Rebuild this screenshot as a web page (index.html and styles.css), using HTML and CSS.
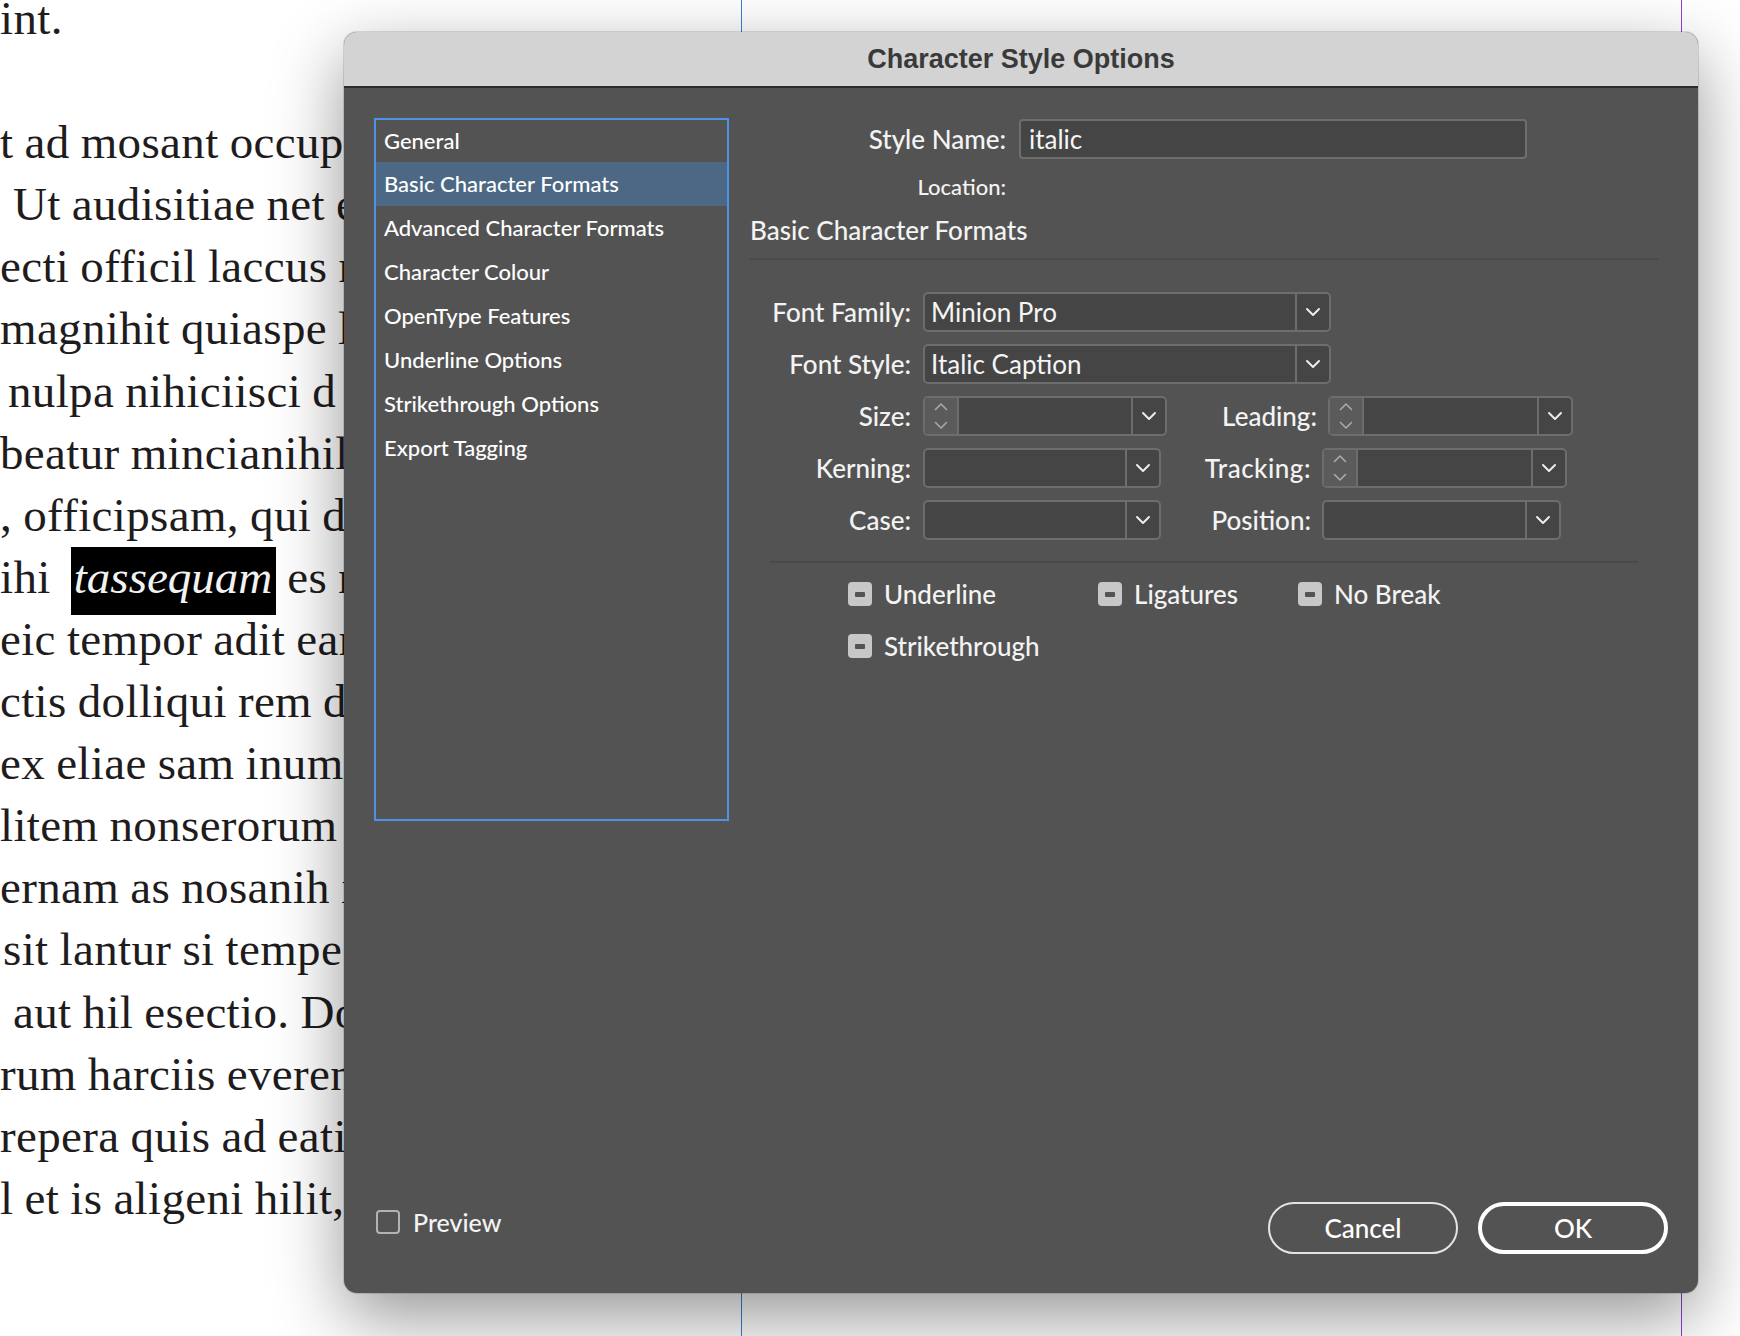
FILE: index.html
```html
<!DOCTYPE html>
<html lang="en">
<head>
<meta charset="utf-8">
<title>Character Style Options</title>
<link rel="stylesheet" href="styles.css">
</head>
<body>
<div class="page">
  <div class="page-text">
    <div class="ln">int.</div>
    <div class="ln"></div>
    <div class="ln">t ad mosant occup</div>
    <div class="ln ind-l">Ut audisitiae net e</div>
    <div class="ln">ecti officil laccus m</div>
    <div class="ln">magnihit quiaspe l</div>
    <div class="ln ind-m">nulpa nihiciisci d</div>
    <div class="ln">beatur mincianihil</div>
    <div class="ln">, officipsam, qui d</div>
    <div class="ln">ihi <span class="hl">tassequam</span> es r</div>
    <div class="ln">eic tempor adit ear</div>
    <div class="ln">ctis dolliqui rem d</div>
    <div class="ln">ex eliae sam inum q</div>
    <div class="ln">litem nonserorum</div>
    <div class="ln">ernam as nosanih i</div>
    <div class="ln ind-s">sit lantur si tempe</div>
    <div class="ln ind-l">aut hil esectio. Do</div>
    <div class="ln">rum harciis everen</div>
    <div class="ln">repera quis ad eati</div>
    <div class="ln">l et is aligeni hilit, s</div>
  </div>

  <div class="guide guide-blue"></div>
  <div class="guide guide-purple"></div>

  <div class="dialog">
    <div class="titlebar">Character Style Options</div>
    <div class="dbody">
      <div class="main">
        <ul class="nav">
          <li class="nav-item first">General</li>
          <li class="nav-item selected">Basic Character Formats</li>
          <li class="nav-item">Advanced Character Formats</li>
          <li class="nav-item">Character Colour</li>
          <li class="nav-item">OpenType Features</li>
          <li class="nav-item">Underline Options</li>
          <li class="nav-item">Strikethrough Options</li>
          <li class="nav-item">Export Tagging</li>
        </ul>

        <div class="panel">
          <div class="name-row">
            <span class="name-label">Style Name:</span>
            <div class="text-input">italic</div>
          </div>
          <div class="loc-row">
            <span class="loc-label">Location:</span>
          </div>
          <div class="section-title">Basic Character Formats</div>
          <div class="sep"></div>

          <div class="fields">
            <div class="frow">
              <span class="flabel">Font Family:</span>
              <div class="combo w-wide">
                <div class="val">Minion Pro</div>
                <div class="arrow"><svg width="16" height="10" viewBox="0 0 16 10"><path d="M2 2 L8 8 L14 2" fill="none" stroke="#ececec" stroke-width="2" stroke-linecap="round" stroke-linejoin="round"/></svg></div>
              </div>
            </div>
            <div class="frow">
              <span class="flabel">Font Style:</span>
              <div class="combo w-wide">
                <div class="val">Italic Caption</div>
                <div class="arrow"><svg width="16" height="10" viewBox="0 0 16 10"><path d="M2 2 L8 8 L14 2" fill="none" stroke="#ececec" stroke-width="2" stroke-linecap="round" stroke-linejoin="round"/></svg></div>
              </div>
            </div>
            <div class="frow">
              <span class="flabel">Size:</span>
              <div class="combo w-size">
                <div class="spin"><svg width="16" height="28" viewBox="0 0 16 28"><path d="M2.5 7.5 L8 2 L13.5 7.5 M2.5 20.5 L8 26 L13.5 20.5" fill="none" stroke="#a9a9a9" stroke-width="1.6" stroke-linecap="round" stroke-linejoin="round"/></svg></div>
                <div class="val"></div>
                <div class="arrow"><svg width="16" height="10" viewBox="0 0 16 10"><path d="M2 2 L8 8 L14 2" fill="none" stroke="#ececec" stroke-width="2" stroke-linecap="round" stroke-linejoin="round"/></svg></div>
              </div>
              <span class="flabel2">Leading:</span>
              <div class="combo w-lead">
                <div class="spin"><svg width="16" height="28" viewBox="0 0 16 28"><path d="M2.5 7.5 L8 2 L13.5 7.5 M2.5 20.5 L8 26 L13.5 20.5" fill="none" stroke="#a9a9a9" stroke-width="1.6" stroke-linecap="round" stroke-linejoin="round"/></svg></div>
                <div class="val"></div>
                <div class="arrow"><svg width="16" height="10" viewBox="0 0 16 10"><path d="M2 2 L8 8 L14 2" fill="none" stroke="#ececec" stroke-width="2" stroke-linecap="round" stroke-linejoin="round"/></svg></div>
              </div>
            </div>
            <div class="frow">
              <span class="flabel">Kerning:</span>
              <div class="combo w-kern">
                <div class="val"></div>
                <div class="arrow"><svg width="16" height="10" viewBox="0 0 16 10"><path d="M2 2 L8 8 L14 2" fill="none" stroke="#ececec" stroke-width="2" stroke-linecap="round" stroke-linejoin="round"/></svg></div>
              </div>
              <span class="flabel2 wide-label">Tracking:</span>
              <div class="combo w-track">
                <div class="spin"><svg width="16" height="28" viewBox="0 0 16 28"><path d="M2.5 7.5 L8 2 L13.5 7.5 M2.5 20.5 L8 26 L13.5 20.5" fill="none" stroke="#a9a9a9" stroke-width="1.6" stroke-linecap="round" stroke-linejoin="round"/></svg></div>
                <div class="val"></div>
                <div class="arrow"><svg width="16" height="10" viewBox="0 0 16 10"><path d="M2 2 L8 8 L14 2" fill="none" stroke="#ececec" stroke-width="2" stroke-linecap="round" stroke-linejoin="round"/></svg></div>
              </div>
            </div>
            <div class="frow">
              <span class="flabel">Case:</span>
              <div class="combo w-kern">
                <div class="val"></div>
                <div class="arrow"><svg width="16" height="10" viewBox="0 0 16 10"><path d="M2 2 L8 8 L14 2" fill="none" stroke="#ececec" stroke-width="2" stroke-linecap="round" stroke-linejoin="round"/></svg></div>
              </div>
              <span class="flabel2">Position:</span>
              <div class="combo w-pos">
                <div class="val"></div>
                <div class="arrow"><svg width="16" height="10" viewBox="0 0 16 10"><path d="M2 2 L8 8 L14 2" fill="none" stroke="#ececec" stroke-width="2" stroke-linecap="round" stroke-linejoin="round"/></svg></div>
              </div>
            </div>
          </div>

          <div class="sep sep-inner"></div>

          <div class="checks">
            <div class="chk"><span class="cbox ind"></span>Underline</div>
            <div class="chk"><span class="cbox ind"></span>Ligatures</div>
            <div class="chk"><span class="cbox ind"></span>No Break</div>
            <div class="chk"><span class="cbox ind"></span>Strikethrough</div>
          </div>
        </div>
      </div>

      <div class="footer">
        <div class="preview"><span class="cbox empty"></span>Preview</div>
        <div class="buttons">
          <button class="btn">Cancel</button>
          <button class="btn btn-ok">OK</button>
        </div>
      </div>
    </div>
  </div>
</div>
</body>
</html>
```

FILE: styles.css
```css
html, body {
  margin: 0;
  padding: 0;
  background: #ffffff;
}

.page {
  position: relative;
  width: 1740px;
  height: 1336px;
  overflow: hidden;
  background: #ffffff;
}

/* Document text behind the dialog (clipped at the dialog edge) */
.page-text {
  width: 344px;
  overflow: hidden;
  margin-top: -13px;
  font-family: "Liberation Serif", "DejaVu Serif", serif;
  font-size: 47px;
  letter-spacing: 0.35px;
  word-spacing: -1px;
  line-height: 62.1px;
  color: #1f1c1d;
  white-space: nowrap;
}

.ln {
  height: 62.1px;
}

.ind-s { padding-left: 3px; }
.ind-m { padding-left: 8px; }
.ind-l { padding-left: 13px; }

.hl {
  margin-left: 9px;
  background: #000000;
  color: #f2f2f2;
  font-style: italic;
  letter-spacing: 0;
  padding: 4px 4px 12px 3px;
}

/* page guides */
.guide {
  position: absolute;
  top: 0;
  bottom: 0;
  width: 1px;
}
.guide-blue { left: 741px; background: #3a7fd6; }
.guide-purple { left: 1681px; background: #8c3fd1; }

/* Dialog */
.dialog {
  position: absolute;
  left: 344px;
  top: 32px;
  width: 1354px;
  height: 1261px;
  display: flex;
  flex-direction: column;
  background: #535353;
  border-radius: 13px;
  overflow: hidden;
  box-shadow: 0 24px 70px rgba(0, 0, 0, 0.42), 0 0 0 1px rgba(0, 0, 0, 0.12);
}

.titlebar {
  height: 54px;
  flex: 0 0 auto;
  display: flex;
  align-items: center;
  justify-content: center;
  background: #d3d3d3;
  border-bottom: 2px solid #2c2c2c;
  font-family: "Liberation Sans", Arial, sans-serif;
  font-weight: 700;
  font-size: 27px;
  color: #3a3a3a;
}

.dbody {
  flex: 1 1 auto;
  display: flex;
  flex-direction: column;
  padding: 30px 30px 39px 30px;
  font-family: Lato, "Open Sans", sans-serif;
  color: #f3f3f3;
}

.main {
  display: flex;
  gap: 21px;
}

/* Left navigation list */
.nav {
  list-style: none;
  margin: 0;
  padding: 0;
  width: 355px;
  height: 703px;
  box-sizing: border-box;
  border: 2px solid #4a93e6;
  flex: 0 0 auto;
}

.nav-item {
  height: 44px;
  display: flex;
  align-items: center;
  padding-left: 8px;
  padding-bottom: 2px;
  box-sizing: border-box;
  font-size: 22px;
  font-weight: 500;
  color: #ffffff;
}
.nav-item.first { height: 42px; }
.nav-item.selected { background: #4c6884; }

/* Right panel */
.panel {
  flex: 1 1 auto;
  display: flex;
  flex-direction: column;
}

.name-row {
  display: flex;
  align-items: center;
  margin-top: 1px;
  height: 40px;
}

.name-label {
  width: 256px;
  text-align: right;
  margin-right: 13px;
  font-size: 26px;
  font-weight: 500;
}

.text-input {
  width: 508px;
  height: 40px;
  box-sizing: border-box;
  border: 2px solid #6e6e6e;
  border-radius: 4px;
  background: #454545;
  padding-left: 8px;
  display: flex;
  align-items: center;
  font-size: 26px;
  color: #f5f5f5;
}

.loc-row {
  margin-top: 12px;
  height: 30px;
  display: flex;
  align-items: center;
}

.loc-label {
  width: 256px;
  text-align: right;
  font-size: 22px;
  font-weight: 500;
}

.section-title {
  margin-top: 13px;
  height: 32px;
  line-height: 32px;
  font-size: 26px;
  font-weight: 500;
}

.sep {
  margin-top: 12px;
  height: 2px;
  width: 908px;
  background: #4a4a4a;
}

.sep-inner {
  margin-top: 21px;
  margin-left: 20px;
  width: 868px;
}

/* Field grid */
.fields {
  margin-top: 32px;
  display: flex;
  flex-direction: column;
  gap: 12px;
}

.frow {
  display: flex;
  align-items: center;
  height: 40px;
}

.flabel {
  width: 161px;
  margin-right: 12px;
  text-align: right;
  font-size: 26px;
  font-weight: 500;
}

.flabel2 {
  width: 150px;
  margin-right: 11px;
  text-align: right;
  font-size: 26px;
  font-weight: 500;
}

.wide-label {
  letter-spacing: 0.5px;
}

.combo {
  height: 40px;
  box-sizing: border-box;
  display: flex;
  border: 2px solid #6d6d6d;
  border-radius: 5px;
  background: #454545;
  overflow: hidden;
}

.w-wide { width: 408px; }
.w-size { width: 244px; }
.w-lead { width: 245px; }
.w-kern { width: 238px; }
.w-track { width: 245px; }
.w-pos { width: 239px; }

.combo .spin {
  width: 34px;
  box-sizing: border-box;
  background: #5b5b5b;
  border-right: 2px solid #6d6d6d;
  display: flex;
  align-items: center;
  justify-content: center;
}

.combo .val {
  flex: 1 1 auto;
  padding-left: 6px;
  display: flex;
  align-items: center;
  font-size: 26px;
  color: #f5f5f5;
  white-space: nowrap;
}

.combo .arrow {
  width: 34px;
  box-sizing: border-box;
  border-left: 2px solid #6d6d6d;
  display: flex;
  align-items: center;
  justify-content: center;
}

/* Checkboxes */
.checks {
  margin-top: 19px;
  padding-left: 98px;
  display: grid;
  grid-template-columns: 250px 200px auto;
  row-gap: 28px;
}

.chk {
  display: flex;
  align-items: center;
  gap: 12px;
  height: 24px;
  line-height: 24px;
  font-size: 26px;
  font-weight: 500;
  white-space: nowrap;
}

.cbox {
  width: 24px;
  height: 24px;
  box-sizing: border-box;
  border-radius: 4px;
  flex: 0 0 auto;
  display: flex;
  align-items: center;
  justify-content: center;
}

.cbox.ind {
  background: #c7c7c7;
}
.cbox.ind::after {
  content: "";
  width: 10px;
  height: 5px;
  border-radius: 1px;
  background: #535353;
}

.cbox.empty {
  border: 2px solid #b3b3b3;
}

/* Footer */
.footer {
  margin-top: auto;
  display: flex;
  align-items: center;
  justify-content: space-between;
  height: 52px;
}

.preview {
  display: flex;
  align-items: center;
  gap: 13px;
  margin-left: 2px;
  margin-bottom: 12px;
  font-size: 25px;
  font-weight: 500;
}

.buttons {
  display: flex;
  gap: 20px;
}

.btn {
  width: 190px;
  height: 52px;
  box-sizing: border-box;
  border: 2px solid #e4e4e4;
  border-radius: 26px;
  background: transparent;
  color: #ffffff;
  font-family: Lato, "Open Sans", sans-serif;
  font-size: 26px;
  font-weight: 500;
  padding: 0;
}

.btn-ok {
  border: 4px solid #ffffff;
}
```
